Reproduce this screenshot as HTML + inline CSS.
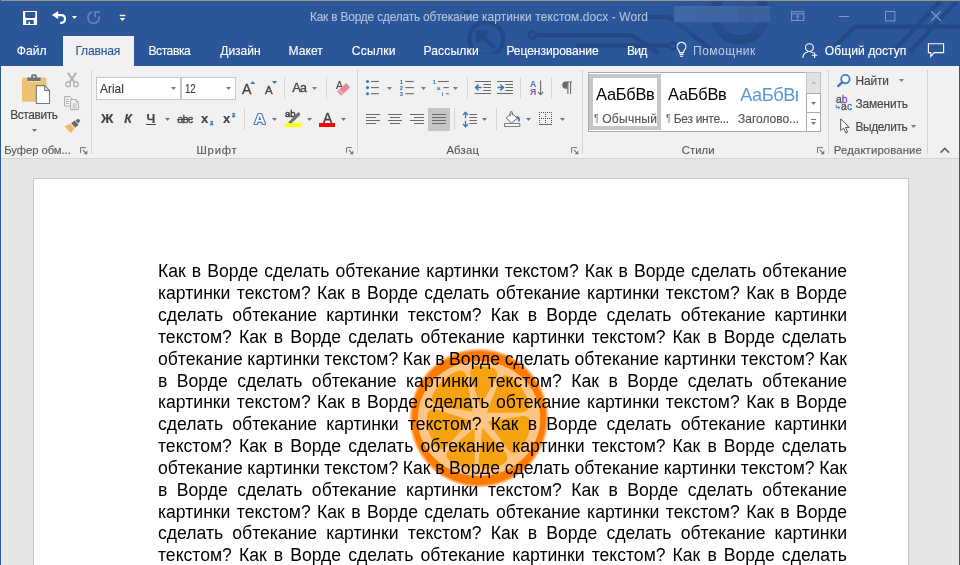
<!DOCTYPE html>
<html lang="ru">
<head>
<meta charset="utf-8">
<title>Как в Ворде сделать обтекание картинки текстом.docx - Word</title>
<style>
*{box-sizing:border-box;margin:0;padding:0}
html,body{width:960px;height:565px;overflow:hidden;background:#e6e6e6}
body{font-family:"Liberation Sans",sans-serif;position:relative;color:#444}
.abs{position:absolute}
#win{position:absolute;left:0;top:0;width:960px;height:565px;overflow:hidden;background:#e6e6e6}
#titlebar{position:absolute;left:0;top:0;width:960px;height:66px;background:#2b579a}
#topline{position:absolute;left:1px;top:0;width:959px;height:1px;background:#9b9488}
#ribbon{position:absolute;left:1px;top:66px;width:958px;height:92px;background:#f1f1f1}
#ribline{position:absolute;left:1px;top:158px;width:958px;height:1px;background:#d4d4d4}
#lborder{position:absolute;left:0;top:66px;width:1px;height:499px;background:#2b579a}
#rborder{position:absolute;left:959px;top:66px;width:1px;height:499px;background:#2b579a}
#page{position:absolute;left:33px;top:178px;width:876px;height:400px;background:#fff;border:1px solid #c6c6c6}
#ui{position:absolute;left:0;top:0;width:960px;height:160px;will-change:transform}
.t{position:absolute;white-space:nowrap;-webkit-text-stroke:0.14px}
.sep{position:absolute;width:1px;background:#d4d4d4}
.box{position:absolute;background:#fff;border:1px solid #c6c6c6}
#doc{position:absolute;left:158px;top:261.3px;will-change:transform;width:689px;height:310px;font-size:17.6px;line-height:21.846px;color:#000}
#doc div{position:absolute;left:0;width:689px;white-space:nowrap;text-align:justify;text-align-last:justify;height:21.846px}
svg{position:absolute;overflow:visible}
</style>
</head>
<body>
<div id="win">
<div id="titlebar"></div>
<div id="ribbon"></div>
<div id="ribline"></div>
<div id="ui">
<svg id="deco" style="left:0;top:1px;overflow:hidden" width="960" height="53.4" viewBox="0 1 960 53.4"><g fill="none" stroke="#234986" stroke-width="4.4" stroke-linecap="butt" stroke-linejoin="round">
<circle cx="739.6" cy="14.5" r="25.3" stroke-width="9.3"/>
<path d="M640,17 H668 Q670,17 671.5,18.4 L712,50"/>
<path d="M536,35.3 H630 Q632,35.3 633.6,36.5 L658,52.6"/>
<path d="M576,45.8 H669"/>
<path d="M835,46.5 L853.5,28 Q855,26.8 857,26.8 H960"/>
<path d="M940,1 L895,50"/>
<path d="M957,1 L910,52"/>
<circle cx="486.3" cy="39" r="17" stroke-width="4.5"/>
<circle cx="467" cy="12.6" r="2.8" fill="#234986" stroke="none"/>
<path d="M495,48 L479,33 M478.4,42 V32.4 H488" stroke-width="4.5" stroke-linejoin="miter"/>
<circle cx="532.5" cy="35" r="3.5" stroke-width="2.6"/>
<circle cx="673.2" cy="45.8" r="3.5" stroke-width="2.6"/>
</g></svg>
<svg style="left:0;top:0;filter:blur(0.5px)" width="960" height="40" viewBox="0 0 960 40"><rect x="674" y="6" width="16.2" height="16.2" fill="#4068a6"/><rect x="674" y="22" width="16.2" height="12" fill="#2c5598" opacity="0.5"/><rect x="690" y="6" width="16.2" height="16.2" fill="#3d66a5"/><rect x="690" y="22" width="16.2" height="12" fill="#2b5497" opacity="0.5"/><rect x="706" y="6" width="16.2" height="16.2" fill="#3e64a1"/><rect x="706" y="22" width="16.2" height="12" fill="#2a5396" opacity="0.5"/><rect x="722" y="6" width="16.2" height="16.2" fill="#3d65a4"/><rect x="722" y="22" width="16.2" height="12" fill="#2b5497" opacity="0.5"/><rect x="738" y="6" width="16.2" height="16.2" fill="#3a5f9c"/><rect x="738" y="22" width="16.2" height="12" fill="#2a5395" opacity="0.5"/><rect x="754" y="6" width="16.2" height="16.2" fill="#3b619f"/><rect x="754" y="22" width="16.2" height="12" fill="#2b5497" opacity="0.5"/></svg>
<svg style="left:22px;top:10px;" width="16" height="16" viewBox="0 0 16 16"><path fill-rule="evenodd" fill="#fff" d="M1,1 H15 V15 H1 Z M3.2,2 V6.9 L4.2,7.9 H12.3 L13.3,6.9 V2 Z M4.2,10.1 V13.9 H6.4 V11.7 H8 V13.9 H11.7 V10.1 Z"/></svg>
<svg style="left:50px;top:9px;" width="18" height="17" viewBox="0 0 18 17"><path d="M5,6.1 H11.2 Q15,6.2 15,10 Q15,13.7 11.2,13.9 H10.2" fill="none" stroke="#fff" stroke-width="2.1"/>
<path d="M8.2,2 L1.9,6.1 L8.2,10.2 Z" fill="#fff"/></svg>
<svg style="left:70.9px;top:15px;" width="7" height="5" viewBox="0 0 7 5"><path d="M1,1 h5 l-2.5,3 z" fill="#fff"/></svg>
<svg style="left:85px;top:9px;" width="18" height="17" viewBox="0 0 18 17"><path d="M7.4,3 A5.7,5.7 0 1 0 14.1,7.2" fill="none" stroke="#6082b9" stroke-width="1.8"/>
<path d="M15,2.9 H10.1 V7.9" fill="none" stroke="#6082b9" stroke-width="1.8"/></svg>
<svg style="left:118px;top:13px;" width="9" height="9" viewBox="0 0 9 9"><rect x="1.7" y="1.8" width="5.6" height="1.4" fill="#fff"/><path d="M1.7,4.9 h5.6 l-2.8,3.1 z" fill="#fff"/></svg>
<span class="t" style="left:309.92px;top:9.90px;font-size:11.9px;line-height:14px;color:#b4c2dc;letter-spacing:-0.179px;-webkit-text-stroke:0.1px;">Как в Ворде сделать обтекание</span>
<span class="t" style="left:482.00px;top:9.90px;font-size:11.9px;line-height:14px;color:#b4c2dc;letter-spacing:0.116px;-webkit-text-stroke:0.1px;">картинки текстом.docx - Word</span>
<svg style="left:790px;top:10px;" width="16" height="12" viewBox="0 0 16 12"><rect x="1.6" y="1.7" width="12.2" height="8.8" fill="none" stroke="#7d98c6" stroke-width="1"/><path d="M1.6,3.9 H13.8" stroke="#7d98c6" stroke-width="1"/><path d="M7.7,10.2 V5.2 M5.7,7.2 L7.7,5.2 L9.7,7.2" fill="none" stroke="#7d98c6" stroke-width="1"/></svg>
<svg style="left:838px;top:15px;" width="12" height="3" viewBox="0 0 12 3"><rect x="0.8" y="1" width="10.4" height="1" fill="#7d98c6"/></svg>
<svg style="left:884px;top:10px;" width="12" height="12" viewBox="0 0 12 12"><rect x="1.5" y="1.5" width="9.4" height="9.4" fill="none" stroke="#7d98c6" stroke-width="1"/></svg>
<svg style="left:930px;top:10px;" width="12" height="12" viewBox="0 0 12 12"><path d="M1,1 L11,11 M11,1 L1,11" stroke="#7d98c6" stroke-width="1.1" fill="none"/></svg>
<div style="position:absolute;left:63px;top:36px;width:71px;height:31px;background:#f1f1f1"></div>
<span class="t" style="left:16.71px;top:44.00px;font-size:12.1px;line-height:14px;color:#fff;letter-spacing:0.057px;-webkit-text-stroke:0.12px;">Файл</span>
<span class="t" style="left:75.41px;top:44.00px;font-size:12.1px;line-height:14px;color:#2b579a;letter-spacing:-0.173px;-webkit-text-stroke:0.12px;">Главная</span>
<span class="t" style="left:148.41px;top:44.00px;font-size:12.1px;line-height:14px;color:#fff;letter-spacing:-0.433px;-webkit-text-stroke:0.12px;">Вставка</span>
<span class="t" style="left:220.32px;top:44.00px;font-size:12.1px;line-height:14px;color:#fff;letter-spacing:-0.070px;-webkit-text-stroke:0.12px;">Дизайн</span>
<span class="t" style="left:288.41px;top:44.00px;font-size:12.1px;line-height:14px;color:#fff;letter-spacing:0.039px;-webkit-text-stroke:0.12px;">Макет</span>
<span class="t" style="left:351.79px;top:44.00px;font-size:12.1px;line-height:14px;color:#fff;letter-spacing:0.207px;-webkit-text-stroke:0.12px;">Ссылки</span>
<span class="t" style="left:423.41px;top:44.00px;font-size:12.1px;line-height:14px;color:#fff;letter-spacing:0.144px;-webkit-text-stroke:0.12px;">Рассылки</span>
<span class="t" style="left:506.41px;top:44.00px;font-size:12.1px;line-height:14px;color:#fff;letter-spacing:-0.086px;-webkit-text-stroke:0.12px;">Рецензирование</span>
<span class="t" style="left:626.91px;top:44.00px;font-size:12.1px;line-height:14px;color:#fff;letter-spacing:-0.702px;-webkit-text-stroke:0.12px;">Вид</span>
<span class="t" style="left:693.03px;top:44.00px;font-size:12px;line-height:14px;color:#c0cce3;letter-spacing:0.519px;-webkit-text-stroke:0;">Помощник</span>
<span class="t" style="left:824.83px;top:44.00px;font-size:12.1px;line-height:14px;color:#fff;letter-spacing:0.028px;-webkit-text-stroke:0.12px;">Общий доступ</span>
<svg style="left:675px;top:42px;" width="13" height="16" viewBox="0 0 13 16"><path d="M4.6,10.6 Q4.4,8.8 3.2,7.6 A4.4,4.4 0 1 1 9.8,7.6 Q8.6,8.8 8.4,10.6 Z" fill="none" stroke="#fff" stroke-width="1.15"/>
<path d="M4.6,12.4 H8.4 M4.9,14.3 H8.1" stroke="#fff" stroke-width="1.1"/></svg>
<svg style="left:801px;top:42px;" width="18" height="17" viewBox="0 0 18 17"><circle cx="8.4" cy="5.6" r="3.9" fill="none" stroke="#fff" stroke-width="1.15"/>
<path d="M1.8,16 Q2,10.6 7,10" fill="none" stroke="#fff" stroke-width="1.15"/>
<path d="M9.6,10 Q11.6,10.2 12.6,11" fill="none" stroke="#fff" stroke-width="1.15"/>
<path d="M13.6,10.4 V16 M10.8,13.2 H16.4" stroke="#fff" stroke-width="1.15"/></svg>
<svg style="left:926px;top:42px;" width="20" height="17" viewBox="0 0 20 17"><path d="M2.4,1.7 H17.6 V10.6 H8.2 L4.8,14.4 V10.6 H2.4 Z" fill="none" stroke="#fff" stroke-width="1.15" stroke-linejoin="miter"/></svg>
<svg style="left:20px;top:72px;" width="32" height="34" viewBox="0 0 32 34"><rect x="2" y="5.4" width="24.4" height="24.4" rx="1.3" fill="#edc373"/>
<path d="M7.2,5.4 h3.9 v-1.6 q0,-1.5 1.5,-1.5 h2.8 q1.5,0 1.5,1.5 v1.6 h3.9 v3.7 h-13.6 z" fill="#737373" stroke="#f1f1f1" stroke-width="0.9" paint-order="stroke"/>
<rect x="13.2" y="3.9" width="1.7" height="1.7" fill="#fbfbfb"/>
<path d="M16.3,13.6 h8.4 l4.8,4.8 v13.1 h-13.2 z" fill="#fff" stroke="#797979" stroke-width="1.1"/>
<path d="M24.7,13.6 v4.8 h4.8" fill="none" stroke="#797979" stroke-width="1.1"/></svg>
<span class="t" style="left:10.22px;top:108.00px;font-size:11.9px;line-height:14px;color:#444;letter-spacing:-0.369px;">Вставить</span>
<svg style="left:31.0px;top:127.9px;" width="7" height="5" viewBox="0 0 7 5"><path d="M1,1 h5 l-2.5,3 z" fill="#777"/></svg>
<svg style="left:64px;top:72px;" width="16" height="16" viewBox="0 0 16 16"><path d="M3.8,0.8 L10.4,10.2 M12.2,0.8 L5.6,10.2" stroke="#ababab" stroke-width="1.8" fill="none"/>
<circle cx="4.1" cy="12.2" r="2.4" fill="none" stroke="#ababab" stroke-width="1.2"/>
<circle cx="11.9" cy="12.2" r="2.4" fill="none" stroke="#ababab" stroke-width="1.2"/></svg>
<svg style="left:63px;top:95px;" width="17" height="16" viewBox="0 0 17 16"><path d="M1.6,1.6 h5.2 l2,2 v7.4 h-7.2 z" fill="#f6f6f6" stroke="#ababab" stroke-width="1"/>
<path d="M3,4.5 h3 M3,6.5 h3 M3,8.5 h3" stroke="#ababab" stroke-width="0.9"/>
<path d="M7.6,4.6 h5.4 l2.4,2.4 v7.6 h-7.8 z" fill="#f6f6f6" stroke="#ababab" stroke-width="1"/>
<path d="M13,4.6 v2.4 h2.4 M9.4,9 h4.4 M9.4,10.9 h4.4 M9.4,12.8 h4.4" stroke="#ababab" stroke-width="0.9" fill="none"/></svg>
<svg style="left:63px;top:118px;" width="18" height="16" viewBox="0 0 18 16"><path d="M12.6,2.6 L14.4,1 Q15.2,0.4 16,1.2 L16.9,2.2 Q17.5,3 16.8,3.7 L15,5.3 Z" fill="#6b6b6b"/>
<path d="M8.2,5.2 L11.6,2.4 L15.6,6.8 L12.2,9.8 Z" fill="#6b6b6b"/>
<path d="M1.6,8.2 L7.2,5.8 L11.6,10.6 L8.2,15 Q4.6,12.8 1.6,8.2 Z" fill="#edbb70"/></svg>
<span class="t" style="left:4.27px;top:144.30px;font-size:11.3px;line-height:12px;color:#595959;letter-spacing:-0.076px;">Буфер обм...</span>
<svg style="left:80px;top:147px;" width="8" height="8" viewBox="0 0 8 8"><path d="M0.5,6 V0.6 H6" fill="none" stroke="#777" stroke-width="1"/><path d="M2.8,2.9 L6,6.1" fill="none" stroke="#777" stroke-width="1.1"/><path d="M7.3,3.6 V7.3 H3.6 Z" fill="#777"/></svg>
<div class="sep" style="left:91px;top:70px;height:84px;background:#d4d4d4"></div>
<div class="box" style="left:96px;top:77px;width:85px;height:23px"></div>
<div class="box" style="left:181px;top:77px;width:55px;height:23px"></div>
<span class="t" style="left:99.68px;top:81.90px;font-size:12.6px;line-height:14px;color:#3a3a3a;transform:scaleX(0.9448);transform-origin:0 0;">Arial</span>
<span class="t" style="left:184.97px;top:81.90px;font-size:12.6px;line-height:14px;color:#3a3a3a;transform:scaleX(0.7647);transform-origin:0 0;">12</span>
<svg style="left:170.0px;top:86.2px;" width="7" height="5" viewBox="0 0 7 5"><path d="M1,1 h5 l-2.5,3 z" fill="#777"/></svg>
<svg style="left:225.0px;top:86.2px;" width="7" height="5" viewBox="0 0 7 5"><path d="M1,1 h5 l-2.5,3 z" fill="#777"/></svg>
<span class="t" style="left:242.17px;top:81.40px;font-size:14.6px;line-height:16px;color:#444;-webkit-text-stroke:0.35px;transform:scaleX(0.9711);transform-origin:0 0;">A</span>
<svg style="left:249px;top:80px;" width="8" height="5" viewBox="0 0 8 5"><path d="M1.2,4 L3.7,1 L6.2,4 Z" fill="#3b76bc"/></svg>
<span class="t" style="left:265.18px;top:84.40px;font-size:11.5px;line-height:12px;color:#444;-webkit-text-stroke:0.35px;transform:scaleX(0.9968);transform-origin:0 0;">A</span>
<svg style="left:271px;top:80px;" width="8" height="5" viewBox="0 0 8 5"><path d="M1,1 H6.2 L3.6,4 Z" fill="#3b76bc"/></svg>
<div class="sep" style="left:284px;top:77px;height:22px;background:#d4d4d4"></div>
<span class="t" style="left:292.17px;top:80.20px;font-size:13px;line-height:15px;color:#444;letter-spacing:-1.086px;-webkit-text-stroke:0.3px;">Aa</span>
<svg style="left:311.1px;top:86.2px;" width="7" height="5" viewBox="0 0 7 5"><path d="M1,1 h5 l-2.5,3 z" fill="#777"/></svg>
<div class="sep" style="left:326px;top:77px;height:22px;background:#d4d4d4"></div>
<span class="t" style="left:335.98px;top:79.00px;font-size:10.5px;line-height:12px;color:#444;">A</span>
<svg style="left:334px;top:80px;" width="18" height="18" viewBox="0 0 18 18"><g transform="translate(9.7,9.3) rotate(-43)"><rect x="-6.2" y="-3" width="12.4" height="6" rx="1.1" fill="#e8879b"/><rect x="-4.3" y="-3" width="1.2" height="6" fill="#f4c4ce"/></g></svg>
<span class="t" style="left:100.80px;top:112.00px;font-size:12.5px;line-height:14px;color:#444;font-weight:bold;transform:scaleX(1.0965);transform-origin:0 0;">Ж</span>
<span class="t" style="left:124.19px;top:112.00px;font-size:12.5px;line-height:14px;color:#444;font-weight:bold;font-style:italic;">К</span>
<span class="t" style="left:146.54px;top:111.80px;font-size:12.5px;line-height:14px;color:#444;font-weight:bold;">Ч</span>
<div class="abs" style="left:146px;top:124px;width:10px;height:1.2px;background:#444"></div>
<svg style="left:164.0px;top:117.2px;" width="7" height="5" viewBox="0 0 7 5"><path d="M1,1 h5 l-2.5,3 z" fill="#777"/></svg>
<span class="t" style="left:177.14px;top:113.00px;font-size:11px;line-height:12px;color:#4a4a4a;letter-spacing:-0.792px;text-decoration:line-through;-webkit-text-stroke:0.35px;">abc</span>
<span class="t" style="left:201.42px;top:111.00px;font-size:13.5px;line-height:15px;color:#444;font-weight:bold;transform:scaleX(0.9686);transform-origin:0 0;">x</span>
<span class="t" style="left:209.90px;top:120.00px;font-size:6px;line-height:6px;color:#2b6cb5;font-weight:bold;-webkit-text-stroke:0.3px;">2</span>
<span class="t" style="left:223.22px;top:111.00px;font-size:13.5px;line-height:15px;color:#444;font-weight:bold;transform:scaleX(0.9686);transform-origin:0 0;">x</span>
<span class="t" style="left:231.90px;top:112.10px;font-size:6px;line-height:6px;color:#2b6cb5;font-weight:bold;-webkit-text-stroke:0.3px;">2</span>
<div class="sep" style="left:244px;top:108px;height:22px;background:#d4d4d4"></div>
<svg style="left:250px;top:108px;" width="20" height="20" viewBox="0 0 20 20"><text x="9.9" y="16.1" text-anchor="middle" font-family="Liberation Sans, sans-serif" font-size="15.4" font-weight="bold" fill="#fff" stroke="#3f7cc4" stroke-width="2.1" stroke-linejoin="round" paint-order="stroke" style="filter:drop-shadow(0 0 0.7px #8fb4e2)">A</text></svg>
<svg style="left:271.1px;top:117.2px;" width="7" height="5" viewBox="0 0 7 5"><path d="M1,1 h5 l-2.5,3 z" fill="#777"/></svg>
<span class="t" style="left:285.00px;top:108.40px;font-size:9.8px;line-height:11px;color:#3c3c3c;-webkit-text-stroke:0.5px;transform:scaleX(0.9718);transform-origin:0 0;">ab</span>
<svg style="left:284px;top:108px;" width="20" height="20" viewBox="0 0 20 20"><path d="M5.6,13 L13.2,4.9 Q14.4,3.8 15.7,4.9 Q16.8,6.2 15.7,7.4 L7.8,15.1 L4.4,15.6 Z" fill="#717171"/><path d="M4.4,15.6 L5.3,13.4 L7.3,15.2 Z" fill="#444"/><rect x="1" y="15.1" width="16.3" height="3.9" fill="#ffff00"/></svg>
<svg style="left:306.1px;top:117.2px;" width="7" height="5" viewBox="0 0 7 5"><path d="M1,1 h5 l-2.5,3 z" fill="#777"/></svg>
<span class="t" style="left:322.67px;top:109.60px;font-size:14px;line-height:16px;color:#444;-webkit-text-stroke:0.45px;transform:scaleX(0.9804);transform-origin:0 0;">A</span>
<div class="abs" style="left:319px;top:123.1px;width:16.2px;height:3.9px;background:#ff0000"></div>
<svg style="left:340.1px;top:117.2px;" width="7" height="5" viewBox="0 0 7 5"><path d="M1,1 h5 l-2.5,3 z" fill="#777"/></svg>
<span class="t" style="left:196.47px;top:144.30px;font-size:11.3px;line-height:12px;color:#595959;letter-spacing:0.785px;">Шрифт</span>
<svg style="left:346px;top:147px;" width="8" height="8" viewBox="0 0 8 8"><path d="M0.5,6 V0.6 H6" fill="none" stroke="#777" stroke-width="1"/><path d="M2.8,2.9 L6,6.1" fill="none" stroke="#777" stroke-width="1.1"/><path d="M7.3,3.6 V7.3 H3.6 Z" fill="#777"/></svg>
<div class="sep" style="left:357px;top:70px;height:84px;background:#d4d4d4"></div>
<svg style="left:0;top:0" width="960" height="160" viewBox="0 0 960 160"><circle cx="367.5" cy="81.5" r="1.55" fill="#3b76bc"/><path d="M371,81.5 H379" stroke="#6a6a6a" stroke-width="1.1"/><circle cx="367.5" cy="87.6" r="1.55" fill="#3b76bc"/><path d="M371,87.6 H379" stroke="#6a6a6a" stroke-width="1.1"/><circle cx="367.5" cy="93.7" r="1.55" fill="#3b76bc"/><path d="M371,93.7 H379" stroke="#6a6a6a" stroke-width="1.1"/></svg>
<svg style="left:386.0px;top:86.2px;" width="7" height="5" viewBox="0 0 7 5"><path d="M1,1 h5 l-2.5,3 z" fill="#777"/></svg>
<svg style="left:0;top:0" width="960" height="160" viewBox="0 0 960 160"><text x="401.4" y="83.5" text-anchor="middle" font-family="Liberation Sans, sans-serif" font-weight="bold" font-size="5.8" fill="#2f6db5">1</text><path d="M405.2,81.5 H413.8" stroke="#6a6a6a" stroke-width="1.1"/><text x="401.4" y="89.6" text-anchor="middle" font-family="Liberation Sans, sans-serif" font-weight="bold" font-size="5.8" fill="#2f6db5">2</text><path d="M405.2,87.6 H413.8" stroke="#6a6a6a" stroke-width="1.1"/><text x="401.4" y="95.7" text-anchor="middle" font-family="Liberation Sans, sans-serif" font-weight="bold" font-size="5.8" fill="#2f6db5">3</text><path d="M405.2,93.7 H413.8" stroke="#6a6a6a" stroke-width="1.1"/></svg>
<svg style="left:420.0px;top:86.2px;" width="7" height="5" viewBox="0 0 7 5"><path d="M1,1 h5 l-2.5,3 z" fill="#777"/></svg>
<svg style="left:0;top:0" width="960" height="160" viewBox="0 0 960 160"><text x="434.3" y="83.9" text-anchor="middle" font-family="Liberation Sans, sans-serif" font-weight="bold" font-size="6.2" fill="#3b76bc">1</text><path d="M438,81.5 H448.8" stroke="#6a6a6a" stroke-width="1.1"/>
<text x="438.4" y="89.7" text-anchor="middle" font-family="Liberation Sans, sans-serif" font-weight="bold" font-size="6.2" fill="#3b76bc">a</text><path d="M443.4,87.6 H448.8" stroke="#6a6a6a" stroke-width="1.1"/>
<text x="442.5" y="95.9" text-anchor="middle" font-family="Liberation Sans, sans-serif" font-weight="bold" font-size="6.2" fill="#3b76bc">i</text><path d="M446,93.7 H448.8" stroke="#6a6a6a" stroke-width="1.1"/></svg>
<svg style="left:452.0px;top:86.2px;" width="7" height="5" viewBox="0 0 7 5"><path d="M1,1 h5 l-2.5,3 z" fill="#777"/></svg>
<div class="sep" style="left:467px;top:77px;height:22px;background:#d4d4d4"></div>
<svg style="left:0;top:0" width="960" height="160" viewBox="0 0 960 160"><path d="M474.8,81.5 H491 M483.3,84.5 H491 M483.3,87.5 H491 M483.3,90.5 H491 M474.8,93.5 H491 " stroke="#6a6a6a" stroke-width="1" fill="none"/><path d="M475.6,87.5 H481.6 M478.6,84.6 L475.6,87.5 L478.6,90.4" stroke="#3b76bc" stroke-width="1.5" fill="none"/><path d="M497,81.5 H513 M505.4,84.5 H513 M505.4,87.5 H513 M505.4,90.5 H513 M497,93.5 H513 " stroke="#6a6a6a" stroke-width="1" fill="none"/><path d="M497.4,87.5 H503.4 M500.4,84.6 L503.4,87.5 L500.4,90.4" stroke="#3b76bc" stroke-width="1.5" fill="none"/></svg>
<div class="sep" style="left:520px;top:77px;height:22px;background:#d4d4d4"></div>
<svg style="left:0;top:0" width="960" height="160" viewBox="0 0 960 160"><text x="533" y="87" text-anchor="middle" font-family="Liberation Sans, sans-serif" font-weight="bold" font-size="8.6" fill="#3b76bc">A</text>
<text x="533" y="95.1" text-anchor="middle" font-family="Liberation Sans, sans-serif" font-weight="bold" font-size="8.6" fill="#8b4fb0">Я</text>
<path d="M540.6,80.6 V94.4 M538,91.8 L540.6,94.6 L543.2,91.8" stroke="#6a6a6a" stroke-width="1.1" fill="none"/></svg>
<div class="sep" style="left:551px;top:77px;height:22px;background:#d4d4d4"></div>
<svg style="left:0;top:0" width="960" height="160" viewBox="0 0 960 160"><path d="M566.8,82 H572 M567.9,82 V94 M570.6,82 V94" stroke="#6a6a6a" stroke-width="1.1" fill="none"/><path d="M567.6,81.5 h-1.8 a3.6,3.6 0 0 0 0,7.2 h1.8 z" fill="#6a6a6a"/></svg>
<svg style="left:0;top:0" width="960" height="160" viewBox="0 0 960 160"><path d="M366,114.5 H380 M366,117.5 H376 M366,120.5 H380 M366,123.5 H376 " stroke="#6a6a6a" stroke-width="1" fill="none"/><path d="M388,114.5 H402 M390,117.5 H400 M388,120.5 H402 M390,123.5 H400 " stroke="#6a6a6a" stroke-width="1" fill="none"/><path d="M410,114.5 H424 M414,117.5 H424 M410,120.5 H424 M414,123.5 H424 " stroke="#6a6a6a" stroke-width="1" fill="none"/><rect x="428" y="108" width="22" height="23" fill="#c5c5c5"/><path d="M432,114.5 H446 M432,117.5 H446 M432,120.5 H446 M432,123.5 H446 " stroke="#6a6a6a" stroke-width="1" fill="none"/><path d="M465.5,112.4 V118.2 M465.5,120.8 V126.6 M463,115 L465.5,112.3 L468,115 M463,124 L465.5,126.7 L468,124" stroke="#3b76bc" stroke-width="1.3" fill="none"/><path d="M469.4,114.5 H477 M469.4,117.5 H477 M469.4,120.5 H477 M469.4,123.5 H477 " stroke="#6a6a6a" stroke-width="1" fill="none"/></svg>
<div class="sep" style="left:454px;top:108px;height:22px;background:#d4d4d4"></div>
<svg style="left:481.1px;top:117.2px;" width="7" height="5" viewBox="0 0 7 5"><path d="M1,1 h5 l-2.5,3 z" fill="#777"/></svg>
<div class="sep" style="left:496px;top:108px;height:22px;background:#d4d4d4"></div>
<svg style="left:0;top:0" width="960" height="160" viewBox="0 0 960 160"><rect x="504.6" y="123.6" width="15.2" height="2.8" fill="#fff" stroke="#6a6a6a" stroke-width="0.9"/>
<path d="M511.6,113 L517.4,118.2 L511.4,123 L506.2,118 Z" fill="#fff" stroke="#6a6a6a" stroke-width="1"/>
<path d="M510.2,116.4 V112.4 Q510.2,111.4 511.3,111.4 Q512.4,111.4 512.4,112.4 V115.2" fill="none" stroke="#6a6a6a" stroke-width="0.9"/>
<path d="M516.6,116 Q519.6,116.2 520,119.2 Q520.2,121.6 518.4,122.2 Q518.8,119.2 516.8,118 Z" fill="#3b76bc"/></svg>
<svg style="left:525.3px;top:117.2px;" width="7" height="5" viewBox="0 0 7 5"><path d="M1,1 h5 l-2.5,3 z" fill="#777"/></svg>
<svg style="left:0;top:0" width="960" height="160" viewBox="0 0 960 160"><path d="M539,112.5 H553 M539,118.5 H553 M539.5,112 V124 M545.5,112 V124 M551.5,112 V124" stroke="#555" stroke-width="1" stroke-dasharray="1 1" fill="none" shape-rendering="crispEdges"/>
<path d="M539,124.5 H552" stroke="#6a6a6a" stroke-width="1" shape-rendering="crispEdges"/></svg>
<svg style="left:559.1px;top:117.2px;" width="7" height="5" viewBox="0 0 7 5"><path d="M1,1 h5 l-2.5,3 z" fill="#777"/></svg>
<span class="t" style="left:446.38px;top:144.30px;font-size:11.3px;line-height:12px;color:#595959;letter-spacing:0.197px;">Абзац</span>
<svg style="left:571px;top:147px;" width="8" height="8" viewBox="0 0 8 8"><path d="M0.5,6 V0.6 H6" fill="none" stroke="#777" stroke-width="1"/><path d="M2.8,2.9 L6,6.1" fill="none" stroke="#777" stroke-width="1.1"/><path d="M7.3,3.6 V7.3 H3.6 Z" fill="#777"/></svg>
<div class="sep" style="left:582px;top:70px;height:84px;background:#d4d4d4"></div>
<div class="abs" style="left:588px;top:72px;width:219px;height:60px;background:#fff;border:1px solid #ababab"></div>
<div class="abs" style="left:589px;top:74px;width:72px;height:56px;background:#fff;border:4px solid #c6c6c6"></div>
<span class="t" style="left:596.07px;top:85.30px;font-size:16.4px;line-height:18px;color:#000;letter-spacing:-0.260px;-webkit-text-stroke:0;">АаБбВв</span>
<span class="t" style="left:593.76px;top:112.20px;font-size:11.6px;line-height:12px;color:#707070;-webkit-text-stroke:0;transform:scaleX(0.7562);transform-origin:0 0;">¶</span>
<span class="t" style="left:602.24px;top:112.40px;font-size:12px;line-height:14px;color:#555;letter-spacing:0.275px;">Обычный</span>
<span class="t" style="left:668.07px;top:85.30px;font-size:16.4px;line-height:18px;color:#000;letter-spacing:-0.260px;-webkit-text-stroke:0;">АаБбВв</span>
<span class="t" style="left:665.66px;top:112.20px;font-size:11.6px;line-height:12px;color:#707070;-webkit-text-stroke:0;transform:scaleX(0.7562);transform-origin:0 0;">¶</span>
<span class="t" style="left:673.82px;top:112.40px;font-size:12px;line-height:14px;color:#555;letter-spacing:-0.321px;">Без инте...</span>
<div class="abs" style="left:736px;top:80px;width:62.4px;height:50px;overflow:hidden"><span class="t" style="left:4.26px;top:4.80px;font-size:18.2px;line-height:20px;color:#5b96d9;letter-spacing:-0.462px;-webkit-text-stroke:0;">АаБбВв</span><span class="t" style="left:2.02px;top:32.40px;font-size:12px;line-height:14px;color:#555;letter-spacing:-0.010px;">Заголово...</span></div>
<div class="abs" style="left:806px;top:72px;width:15px;height:22px;background:#e2e2e2;border:1px solid #c6c6c6"></div>
<div class="abs" style="left:806px;top:93px;width:15px;height:20px;background:#fff;border:1px solid #ababab"></div>
<div class="abs" style="left:806px;top:112px;width:15px;height:20px;background:#fff;border:1px solid #ababab"></div>
<svg style="left:810px;top:80px;" width="8" height="5" viewBox="0 0 8 5"><path d="M1.2,4 L3.7,1 L6.2,4 Z" fill="#bdbdbd"/></svg>
<svg style="left:810.0px;top:101.2px;" width="7" height="5" viewBox="0 0 7 5"><path d="M1,1 h5 l-2.5,3 z" fill="#777"/></svg>
<div class="abs" style="left:811px;top:119.4px;width:5px;height:1px;background:#777"></div>
<svg style="left:810.0px;top:121.4px;" width="7" height="5" viewBox="0 0 7 5"><path d="M1,1 h5 l-2.5,3 z" fill="#777"/></svg>
<span class="t" style="left:681.83px;top:144.30px;font-size:11.3px;line-height:12px;color:#595959;letter-spacing:0.047px;">Стили</span>
<svg style="left:817px;top:147px;" width="8" height="8" viewBox="0 0 8 8"><path d="M0.5,6 V0.6 H6" fill="none" stroke="#777" stroke-width="1"/><path d="M2.8,2.9 L6,6.1" fill="none" stroke="#777" stroke-width="1.1"/><path d="M7.3,3.6 V7.3 H3.6 Z" fill="#777"/></svg>
<div class="sep" style="left:828px;top:70px;height:84px;background:#d4d4d4"></div>
<svg style="left:836px;top:72px;" width="16" height="16" viewBox="0 0 16 16"><circle cx="9.4" cy="7.1" r="4.2" fill="#f9fbfe" stroke="#3f7dc5" stroke-width="1.8"/><path d="M6.2,10.4 L2.2,14" stroke="#3f7dc5" stroke-width="2.4" stroke-linecap="round"/></svg>
<span class="t" style="left:855.42px;top:73.80px;font-size:11.9px;line-height:14px;color:#444;letter-spacing:-0.091px;">Найти</span>
<svg style="left:897.9px;top:78.4px;" width="7" height="5" viewBox="0 0 7 5"><path d="M1,1 h5 l-2.5,3 z" fill="#777"/></svg>
<span class="t" style="left:835.96px;top:94.00px;font-size:10.4px;line-height:11px;color:#555;-webkit-text-stroke:0.35px;">a</span>
<span class="t" style="left:841.73px;top:94.00px;font-size:10.4px;line-height:11px;color:#8b4fb0;-webkit-text-stroke:0.35px;">b</span>
<span class="t" style="left:840.96px;top:101.20px;font-size:10.4px;line-height:11px;color:#555;-webkit-text-stroke:0.35px;">a</span>
<span class="t" style="left:846.96px;top:101.20px;font-size:10.4px;line-height:11px;color:#3b76bc;-webkit-text-stroke:0.35px;">c</span>
<svg style="left:835px;top:104px;" width="6" height="6" viewBox="0 0 6 6"><path d="M1.2,0.8 V3.6 H4.6 M3.2,2 L4.8,3.6 L3.2,5.2" fill="none" stroke="#3b76bc" stroke-width="1"/></svg>
<span class="t" style="left:855.42px;top:96.70px;font-size:11.9px;line-height:14px;color:#444;letter-spacing:-0.116px;">Заменить</span>
<svg style="left:839px;top:117px;" width="12" height="17" viewBox="0 0 12 17"><path d="M1.7,1.8 V13.6 L4.6,11 L6.8,15.9 L8.6,15.1 L6.5,10.4 H10.2 Z" fill="#fff" stroke="#555" stroke-width="1" stroke-linejoin="miter"/></svg>
<span class="t" style="left:855.42px;top:119.70px;font-size:11.9px;line-height:14px;color:#444;letter-spacing:-0.362px;">Выделить</span>
<svg style="left:910.4px;top:124.2px;" width="7" height="5" viewBox="0 0 7 5"><path d="M1,1 h5 l-2.5,3 z" fill="#777"/></svg>
<span class="t" style="left:833.87px;top:144.30px;font-size:11.3px;line-height:12px;color:#595959;letter-spacing:0.149px;">Редактирование</span>
<div class="sep" style="left:927px;top:70px;height:84px;background:#d4d4d4"></div>
<svg style="left:939px;top:146px;" width="12" height="9" viewBox="0 0 12 9"><path d="M1.6,6.6 L5.8,2.4 L10,6.6" fill="none" stroke="#666" stroke-width="1.8"/></svg>
</div>
<div id="topline"></div>
<div id="lborder"></div>
<div id="rborder"></div>
<div id="page"></div>
<svg id="orange" style="left:404.2px;top:343.4px;filter:blur(0.7px)" width="150" height="150" viewBox="-75 -75 150 150">
<defs>
<radialGradient id="og" cx="0" cy="0" r="70" gradientUnits="userSpaceOnUse">
<stop offset="0" stop-color="#ff7b00"/><stop offset="0.945" stop-color="#ff7b00"/><stop offset="0.975" stop-color="#ff8514" stop-opacity="0.6"/><stop offset="1" stop-color="#ff9a3c" stop-opacity="0"/>
</radialGradient>
</defs>
<circle r="70" fill="url(#og)"/>
<ellipse cx="0" cy="0.6" rx="61.3" ry="57.6" fill="#ffc585"/>
<g fill="#f7a211" style="filter:blur(0.7px)"><path d="M8.9,3.7 Q17.9,2.1 43.0,-1.9 Q51.7,-2.6 51.7,5.9 A52.0,52.0 0 0 1 40.7,32.4 Q34.7,38.4 29.1,31.7 Q14.1,11.2 8.9,3.7 Z"/><path d="M3.4,10.1 Q9.2,16.6 26.2,34.2 Q31.8,40.8 24.8,45.7 A52.0,52.0 0 0 1 7.7,51.4 Q-0.8,51.7 -0.4,43.0 Q2.6,18.8 3.4,10.1 Z"/><path d="M-4.4,9.7 Q-4.6,18.5 -4.1,42.8 Q-4.6,51.5 -13.0,50.3 A52.0,52.0 0 0 1 -29.4,42.9 Q-35.9,37.3 -29.6,31.2 Q-10.9,15.6 -4.4,9.7 Z"/><path d="M-9.1,2.4 Q-15.0,9.5 -32.3,28.5 Q-38.5,34.5 -43.9,27.9 A52.0,52.0 0 0 1 -52.0,-2.3 Q-50.6,-10.7 -42.2,-8.6 Q-17.8,-0.7 -9.1,2.4 Z"/><path d="M-6.5,-6.5 Q-15.8,-7.7 -41.3,-12.2 Q-49.7,-14.4 -46.9,-22.4 A52.0,52.0 0 0 1 -22.4,-46.9 Q-14.4,-49.7 -12.2,-41.3 Q-7.7,-15.8 -6.5,-6.5 Z"/><path d="M1.2,-11.0 Q-1.1,-19.4 -8.6,-42.2 Q-10.7,-50.6 -2.3,-52.0 A52.0,52.0 0 0 1 13.0,-50.3 Q21.0,-47.3 17.1,-39.5 Q5.1,-18.7 1.2,-11.0 Z"/><path d="M7.7,-5.3 Q10.9,-14.0 20.6,-37.8 Q24.4,-45.6 31.7,-41.2 A52.0,52.0 0 0 1 49.9,-14.8 Q51.3,-6.4 42.7,-5.6 Q17.0,-5.1 7.7,-5.3 Z"/></g>
</svg>
<div id="doc">
<div style="top:0px;">Как в Ворде сделать обтекание картинки текстом? Как в Ворде сделать обтекание</div>
<div style="top:22px;">картинки текстом? Как в Ворде сделать обтекание картинки текстом? Как в Ворде</div>
<div style="top:44px;">сделать обтекание картинки текстом? Как в Ворде сделать обтекание картинки</div>
<div style="top:66px;">текстом? Как в Ворде сделать обтекание картинки текстом? Как в Ворде сделать</div>
<div style="top:88px;word-spacing:-0.6px;">обтекание картинки текстом? Как в Ворде сделать обтекание картинки текстом? Как</div>
<div style="top:110px;">в Ворде сделать обтекание картинки текстом? Как в Ворде сделать обтекание</div>
<div style="top:131px;">картинки текстом? Как в Ворде сделать обтекание картинки текстом? Как в Ворде</div>
<div style="top:153px;">сделать обтекание картинки текстом? Как в Ворде сделать обтекание картинки</div>
<div style="top:175px;">текстом? Как в Ворде сделать обтекание картинки текстом? Как в Ворде сделать</div>
<div style="top:197px;word-spacing:-0.6px;">обтекание картинки текстом? Как в Ворде сделать обтекание картинки текстом? Как</div>
<div style="top:219px;">в Ворде сделать обтекание картинки текстом? Как в Ворде сделать обтекание</div>
<div style="top:241px;">картинки текстом? Как в Ворде сделать обтекание картинки текстом? Как в Ворде</div>
<div style="top:262px;">сделать обтекание картинки текстом? Как в Ворде сделать обтекание картинки</div>
<div style="top:284px;">текстом? Как в Ворде сделать обтекание картинки текстом? Как в Ворде сделать</div>
<div style="top:306px;word-spacing:-0.6px;">обтекание картинки текстом? Как в Ворде сделать обтекание картинки текстом? Как</div>
</div>
</div>
</body>
</html>
